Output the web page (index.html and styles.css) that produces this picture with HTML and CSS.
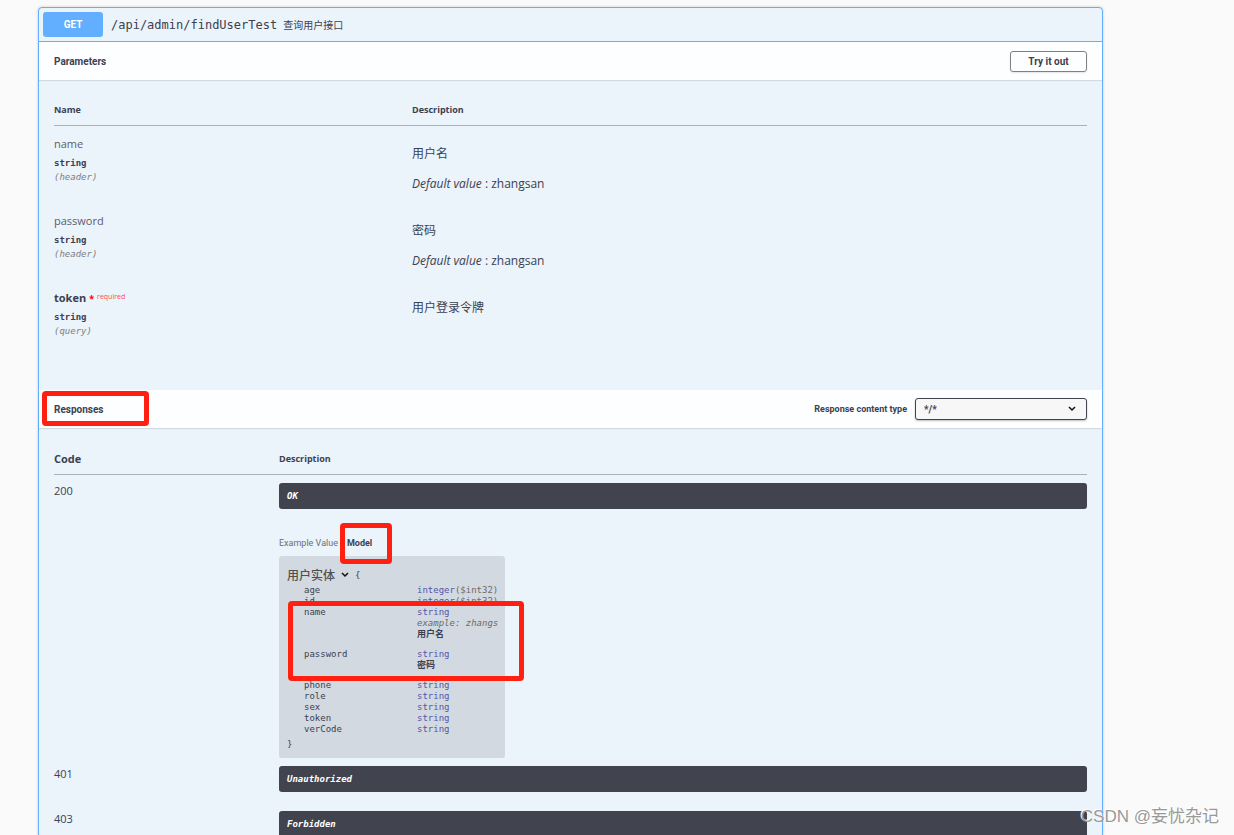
FILE: index.html
```html
<!DOCTYPE html>
<html lang="zh-CN">
<head>
<meta charset="utf-8">
<title>API documentation</title>
<link rel="stylesheet" href="styles.css">
</head>
<body>
<main class="page">
  <section class="operation">
    <header class="summary">
      <span class="method">GET</span>
      <span class="path">/api/admin/findUserTest</span>
      <span class="summary-text">查询用户接口</span>
    </header>

    <div class="section-header">
      <h2 class="section-title">Parameters</h2>
      <button class="try-out" type="button">Try it out</button>
    </div>
    <div class="section-body parameters">
      <table class="grid">
        <thead>
          <tr><th class="col-name">Name</th><th>Description</th></tr>
        </thead>
        <tbody>
          <tr>
            <td><div class="param-name">name</div><div class="param-type">string</div><div class="param-in">(header)</div></td>
            <td class="param-desc"><p>用户名</p><p><i>Default value</i> : zhangsan</p></td>
          </tr>
          <tr>
            <td><div class="param-name">password</div><div class="param-type">string</div><div class="param-in">(header)</div></td>
            <td class="param-desc"><p>密码</p><p><i>Default value</i> : zhangsan</p></td>
          </tr>
          <tr>
            <td><div class="param-name needed">token<span class="star">*</span><span class="required">required</span></div><div class="param-type">string</div><div class="param-in">(query)</div></td>
            <td class="param-desc"><p>用户登录令牌</p></td>
          </tr>
        </tbody>
      </table>
    </div>

    <div class="section-header">
      <h2 class="section-title">Responses</h2>
      <div class="content-type">
        <label for="content-type">Response content type</label>
        <span class="select-wrap">
          <select id="content-type"><option>*/*</option></select>
          <svg class="chevron" viewBox="0 0 8 6" aria-hidden="true"><path d="M1 1l3 3 3-3"/></svg>
        </span>
      </div>
    </div>
    <div class="section-body responses">
      <table class="grid">
        <thead>
          <tr><th class="col-code">Code</th><th>Description</th></tr>
        </thead>
        <tbody>
          <tr>
            <td class="code">200</td>
            <td class="response">
              <div class="message">OK</div>
              <div class="tabs">
                <button class="tab" type="button">Example Value</button>
                <button class="tab active" type="button">Model</button>
              </div>
              <div class="model">
                <div class="model-head">
                  <span class="model-title">用户实体</span>
                  <svg class="chevron" viewBox="0 0 8 6" aria-hidden="true"><path d="M1 1l3 3 3-3"/></svg>
                  <span>{</span>
                </div>
                <table class="props">
                  <tbody>
                    <tr><th>age</th><td><span class="type">integer</span>($int32)</td></tr>
                    <tr><th>id</th><td><span class="type">integer</span>($int32)</td></tr>
                    <tr class="described"><th>name</th><td><span class="type">string</span><br><i>example: zhangs</i><br><b>用户名</b></td></tr>
                    <tr class="described"><th>password</th><td><span class="type">string</span><br><b>密码</b></td></tr>
                    <tr><th>phone</th><td><span class="type">string</span></td></tr>
                    <tr><th>role</th><td><span class="type">string</span></td></tr>
                    <tr><th>sex</th><td><span class="type">string</span></td></tr>
                    <tr><th>token</th><td><span class="type">string</span></td></tr>
                    <tr><th>verCode</th><td><span class="type">string</span></td></tr>
                  </tbody>
                </table>
                <div class="model-foot">}</div>
              </div>
            </td>
          </tr>
          <tr>
            <td class="code">401</td>
            <td class="response"><div class="message">Unauthorized</div></td>
          </tr>
          <tr class="spaced">
            <td class="code">403</td>
            <td class="response"><div class="message">Forbidden</div></td>
          </tr>
        </tbody>
      </table>
    </div>
  </section>
  <div class="mark mark-responses"></div>
  <div class="mark mark-model"></div>
  <div class="mark mark-fields"></div>
  <div class="watermark">CSDN @妄忧杂记</div>
</main>
</body>
</html>
```
FILE: styles.css
```css
* { box-sizing: border-box; }

body {
  margin: 0;
  background: #fafafa;
  color: #3b4151;
  font-family: "Open Sans", "Noto Sans CJK SC", sans-serif;
  font-size: 12px;
}

.page {
  position: relative;
  height: 100vh;
  overflow: hidden;
  padding: 7px 131px 0 38px;
}

.operation {
  border: 1px solid #61affe;
  border-radius: 4px;
  background: #ebf3fb;
  box-shadow: 0 0 3px rgba(0, 0, 0, .19);
}

.summary {
  display: flex;
  align-items: center;
  height: 34px;
  padding: 0 4px;
  border-bottom: 1px solid #61affe;
}

.method {
  width: 60px;
  border-radius: 3px;
  background: #61affe;
  color: #fff;
  font: bold 10px/25px Roboto, sans-serif;
  text-align: center;
}

.path {
  margin: 0 6px 0 8px;
  font: 12px/16px "DejaVu Sans Mono", monospace;
}

.summary-text { font-size: 10px; }

.section-header {
  display: flex;
  align-items: center;
  justify-content: space-between;
  height: 38px;
  padding: 0 15px;
  background: #fdfeff;
  box-shadow: 0 1px 1px rgba(0, 0, 0, .1);
}

.section-title {
  margin: 0;
  padding-top: 1px;
  font: bold 10px/16px Roboto, sans-serif;
}

.try-out {
  width: 77px;
  height: 21px;
  padding: 0;
  border: 1px solid #808080;
  border-radius: 3px;
  background: transparent;
  box-shadow: 0 1px 2px rgba(0, 0, 0, .1);
  color: #3b4151;
  font: bold 10px Roboto, sans-serif;
}

.section-body { padding: 0 15px; }
.parameters { padding-bottom: 33px; }

.grid {
  width: 100%;
  border-collapse: separate;
  border-spacing: 0;
  table-layout: fixed;
}

.grid > thead th {
  padding: 22px 0 7px;
  border-bottom: 1px solid #a8b0bd;
  font: bold 9px/16px "Open Sans", sans-serif;
  text-align: left;
}

.grid > tbody > tr > td { padding: 0; vertical-align: top; }
.parameters .grid > tbody > tr { height: 77px; }
.parameters .grid > tbody > tr > td { padding-top: 10px; }
.col-name { width: 358px; }

.param-name { color: #5a5e6b; font-size: 11px; line-height: 16px; }
.needed { color: #3b4151; font-weight: bold; }
.star { margin: 0 3px; color: #f00; font-size: 9px; line-height: 9px; }
.required {
  color: #ff4d4d;
  font-size: 7px;
  font-weight: normal;
  vertical-align: 3px;
  line-height: 7px;
}

.param-type,
.param-in { font: bold 9px/14px "DejaVu Sans Mono", monospace; }
.param-type { margin-top: 4px; }
.param-in { color: #808080; font-style: italic; font-weight: normal; }

.parameters .grid > tbody > tr > .param-desc { padding-top: 19px; }
.param-desc p { margin: 0 0 12px; line-height: 18px; }
.param-desc p:last-child { margin-bottom: 0; }

.content-type {
  display: flex;
  align-items: center;
  gap: 8px;
  font: bold 9px Roboto, sans-serif;
}

.select-wrap { position: relative; display: flex; }

.content-type select {
  appearance: none;
  width: 172px;
  height: 22px;
  padding: 0 8px;
  border: 1px solid #41444e;
  border-radius: 3px;
  background: #f7f7f7;
  box-shadow: 0 1px 2px rgba(0, 0, 0, .25);
  color: #3b4151;
  font: bold 10px Roboto, sans-serif;
}

.chevron {
  width: 8px;
  height: 6px;
  fill: none;
  stroke: #111;
  stroke-width: 1.5;
}

.select-wrap .chevron { position: absolute; top: 8px; right: 11px; }

.responses .grid > thead th { padding: 23px 0 7px; }
.responses .grid > thead .col-code { width: 225px; font-size: 11px; }

.code { font-size: 11px; line-height: 32px; }
.responses .grid > tbody > tr > .response { padding: 8px 0 0; }
.responses .grid > tbody > .spaced > .response { padding-top: 19px; }
.responses .grid > tbody > .spaced > .code { padding-top: 11px; }

.message {
  padding: 0 8px;
  border-radius: 3px;
  background: #41444e;
  color: #fff;
  font: italic bold 9px/26px "DejaVu Sans Mono", monospace;
}

.tabs { display: flex; gap: 9px; padding: 26px 0 5px; }

.tab {
  padding: 0;
  border: 0;
  background: none;
  color: #6b6f7a;
  font: 9px/16px Roboto, sans-serif;
}

.tab.active { color: #3b4151; font-weight: bold; }

.model {
  width: 226px;
  padding: 9px 8px 8px;
  border-radius: 3px;
  background: #d3d9e0;
  font: 9px/11px "DejaVu Sans Mono", "Noto Sans CJK SC", monospace;
}

.model-head { display: flex; align-items: center; gap: 6px; height: 20px; }
.model-title { color: #505050; font: 500 12px/20px "Noto Sans CJK SC", sans-serif; }

.props { margin-left: 17px; border-collapse: collapse; line-height: 11px; white-space: nowrap; }
.props th { width: 113px; min-width: 113px; padding: 0; font-weight: normal; text-align: left; vertical-align: top; }
.props td { padding: 0; color: #6b6b6b; }
.props b { color: #3b4151; }
.props .described > td { padding-bottom: 9px; }
.type { color: #5555aa; }
.model-foot { margin-top: 4px; }

/* Highlight frames over the documentation */
.mark {
  position: absolute;
  border: 5px solid #ff2012;
  border-radius: 4px;
  pointer-events: none;
}
.mark-responses { left: 42px; top: 391px; width: 107px; height: 35px; }
.mark-model { left: 340px; top: 523px; width: 52px; height: 41px; }
.mark-fields { left: 288px; top: 601px; width: 236px; height: 80px; }

.watermark {
  position: absolute;
  right: 15px;
  bottom: 6px;
  color: #999;
  font: 17px/24px "Liberation Sans", "Noto Sans CJK SC", sans-serif;
  text-shadow: -1px -1px 0 #fff;
}
```
